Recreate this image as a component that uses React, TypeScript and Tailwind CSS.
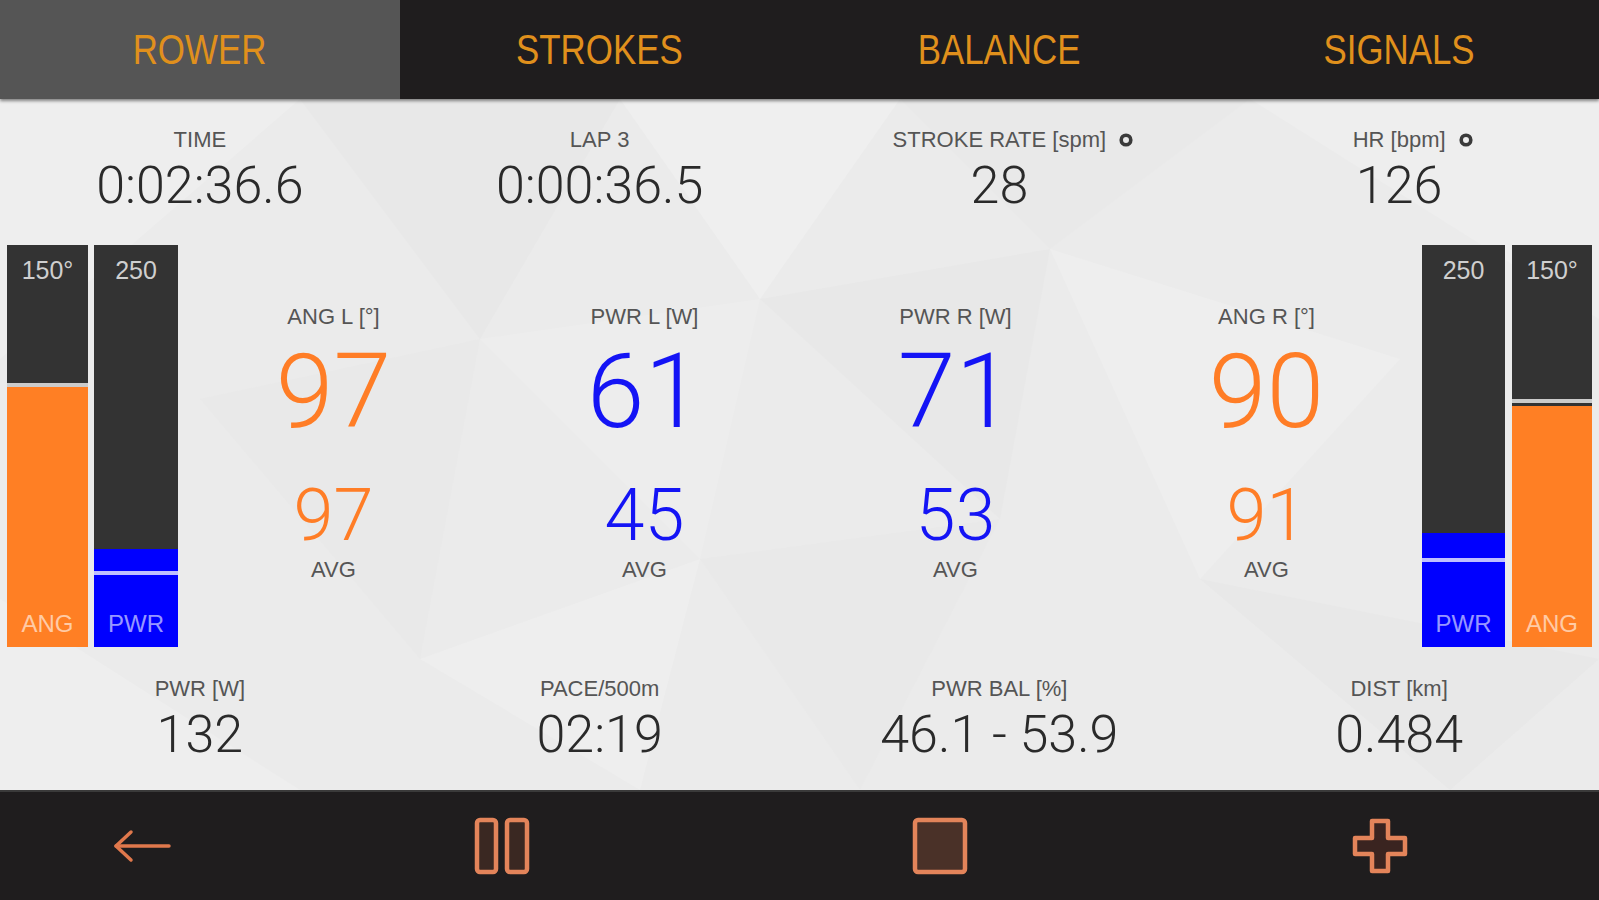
import React from "react";

type BarProps = {
  w: string;
  value: number;
  avg: number;
  max: number;
  fill: string;
  top: string;
  bottom: string;
};

const tabs = ["ROWER", "STROKES", "BALANCE", "SIGNALS"];

const topStats = [
  { label: "TIME", value: "0:02:36.6" },
  { label: "LAP 3", value: "0:00:36.5" },
  { label: "STROKE RATE [spm]", value: "28", gear: true },
  { label: "HR [bpm]", value: "126", gear: true },
];

const bottomStats = [
  { label: "PWR [W]", value: "132" },
  { label: "PACE/500m", value: "02:19" },
  { label: "PWR BAL [%]", value: "46.1 - 53.9" },
  { label: "DIST [km]", value: "0.484" },
];

const midStats = [
  { label: "ANG L [°]", value: "97", avg: "97", color: "text-[#ff7d26]" },
  { label: "PWR L [W]", value: "61", avg: "45", color: "text-[#1414f5]" },
  { label: "PWR R [W]", value: "71", avg: "53", color: "text-[#1414f5]" },
  { label: "ANG R [°]", value: "90", avg: "91", color: "text-[#ff7d26]" },
];

const num = "font-['Roboto','Liberation_Sans',sans-serif] font-light";

function Gear() {
  return (
    <svg width="16" height="16" viewBox="0 0 16 16" className="absolute top-1/2 left-full ml-[12px] -translate-y-1/2">
      <circle cx="8" cy="8" r="4.8" fill="none" stroke="#3a3a3a" strokeWidth="3.6" />
    </svg>
  );
}

function Bar({ w, value, avg, max, fill, top, bottom }: BarProps) {
  const pct = (value / max) * 100;
  const avgPct = (avg / max) * 100;
  return (
    <div className={`relative h-full bg-[#333333] ${w}`}>
      <div className={`absolute inset-x-0 bottom-0 ${fill}`} style={{ height: `${pct}%` }} />
      <div className="absolute inset-x-0 h-[4px] bg-white/75" style={{ bottom: `${avgPct}%` }} />
      <div className="relative flex h-full flex-col items-center justify-between pt-[10px] pb-[8px]">
        <span className="text-[25px] leading-[30px] text-[#cfcfcf]">{top}</span>
        <span className="text-[24px] leading-[30px] text-white/60">{bottom}</span>
      </div>
    </div>
  );
}

function Background() {
  return (
    <svg className="absolute inset-0 h-full w-full" viewBox="0 0 1599 691" preserveAspectRatio="none">
      <rect width="1599" height="691" fill="#ebebeb" />
      <polygon points="0,0 300,0 0,260" fill="#eeeeee" />
      <polygon points="300,0 620,0 480,240" fill="#e8e8e8" />
      <polygon points="620,0 900,0 760,200" fill="#efefef" />
      <polygon points="900,0 1250,0 1050,150" fill="#e9e9e9" />
      <polygon points="1250,0 1599,0 1599,220" fill="#eeeeee" />
      <polygon points="480,240 760,200 700,460" fill="#ededed" />
      <polygon points="760,200 1050,150 1000,420" fill="#e8e8e8" />
      <polygon points="1050,150 1400,260 1200,480" fill="#eeeeee" />
      <polygon points="200,300 480,240 420,560" fill="#e9e9e9" />
      <polygon points="700,460 1000,420 860,691" fill="#e9e9e9" />
      <polygon points="0,500 300,691 0,691" fill="#eeeeee" />
      <polygon points="1200,480 1599,560 1450,691" fill="#e8e8e8" />
      <polygon points="420,560 700,460 640,691" fill="#eeeeee" />
    </svg>
  );
}

function BackIcon() {
  return (
    <svg width="62" height="40" viewBox="0 0 62 40" fill="none" stroke="#e0784c" strokeWidth="3.5" strokeLinecap="round" strokeLinejoin="round">
      <path d="M58 20 H5" />
      <path d="M20 6 L5 20 L20 34" />
    </svg>
  );
}

function PauseIcon() {
  return (
    <svg width="56" height="58" viewBox="0 0 56 58" fill="#3a2822" stroke="#e3845a" strokeWidth="4.5">
      <rect x="3" y="3" width="19" height="52" rx="3" />
      <rect x="33" y="3" width="20" height="52" rx="3" />
    </svg>
  );
}

function StopIcon() {
  return (
    <svg width="56" height="58" viewBox="0 0 56 58" fill="#4a3128" stroke="#e3845a" strokeWidth="4.5">
      <rect x="3" y="3" width="50" height="52" rx="3" />
    </svg>
  );
}

function PlusIcon() {
  return (
    <svg width="56" height="56" viewBox="0 0 56 56" fill="#3a2420" stroke="#e3845a" strokeWidth="4.5" strokeLinejoin="round">
      <path d="M20 3 H36 V20 H53 V36 H36 V53 H20 V36 H3 V20 H20 Z" />
    </svg>
  );
}

function StatCell({ label, value, gear }: { label: string; value: string; gear?: boolean }) {
  return (
    <div className="flex flex-col items-center">
      <div className="relative h-[24px] text-[22px] leading-[24px] text-[#555555]">
        <span>{label}</span>
        {gear && <Gear />}
      </div>
      <div className={`mt-[8px] text-[52px] leading-none text-[#2a2a2a] ${num}`}>{value}</div>
    </div>
  );
}

export default function App() {
  return (
    <div className="flex h-[900px] w-[1599px] flex-col overflow-hidden bg-[#1f1d1e] font-['Liberation_Sans',sans-serif]">
      <header className="relative z-10 grid h-[99px] grid-cols-4 bg-[#1f1d1e] shadow-[0_2px_3px_rgba(0,0,0,0.45)]">
        {tabs.map((t, i) => (
          <div
            key={t}
            className={`flex items-center justify-center text-[42px] text-[#e0901c] ${i === 0 ? "bg-[#555555]" : ""}`}
          >
            <span className="inline-block scale-x-[0.83]">{t}</span>
          </div>
        ))}
      </header>

      <main className="relative flex h-[691px] flex-col">
        <Background />
        <div className="relative grid grid-cols-4 pt-[29px]">
          {topStats.map((s) => (
            <StatCell key={s.label} {...s} />
          ))}
        </div>

        <div className="relative mt-[33px] flex h-[402px] px-[7px]">
          <Bar w="w-[81px]" value={97} avg={97} max={150} fill="bg-[#ff7f24]" top="150°" bottom="ANG" />
          <div className="w-[6px]" />
          <Bar w="w-[84px]" value={61} avg={45} max={250} fill="bg-[#0000ff]" top="250" bottom="PWR" />
          <div className="grid flex-1 grid-cols-4">
            {midStats.map((m) => (
              <div key={m.label} className="flex flex-col items-center pt-[60px]">
                <div className="h-[24px] text-[22px] leading-[24px] text-[#555555]">{m.label}</div>
                <div className={`mt-[11px] text-[104px] leading-none ${num} ${m.color}`}>{m.value}</div>
                <div className={`mt-[36px] text-[72px] leading-none ${num} ${m.color}`}>{m.avg}</div>
                <div className="mt-[7px] text-[22px] leading-[22px] text-[#555555]">AVG</div>
              </div>
            ))}
          </div>
          <Bar w="w-[83px]" value={71} avg={53} max={250} fill="bg-[#0000ff]" top="250" bottom="PWR" />
          <div className="w-[7px]" />
          <Bar w="w-[80px]" value={90} avg={91} max={150} fill="bg-[#ff7f24]" top="150°" bottom="ANG" />
        </div>

        <div className="relative mt-[30px] grid grid-cols-4">
          {bottomStats.map((s) => (
            <StatCell key={s.label} {...s} />
          ))}
        </div>
      </main>

      <footer className="grid h-[110px] grid-cols-[284px_436px_440px_1fr] items-center border-t-2 border-[#3a3a3a] bg-[#1f1d1e]">
        <div className="flex justify-center">
          <BackIcon />
        </div>
        <div className="flex justify-center">
          <PauseIcon />
        </div>
        <div className="flex justify-center">
          <StopIcon />
        </div>
        <div className="flex justify-center">
          <PlusIcon />
        </div>
      </footer>
    </div>
  );
}
